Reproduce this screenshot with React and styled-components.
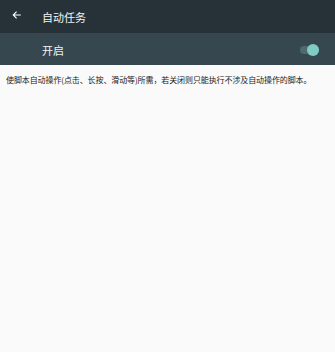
import styled, { createGlobalStyle } from "styled-components";

const Global = createGlobalStyle`
  html, body { margin: 0; padding: 0; background: #fafafa; }
  body { font-family: "Noto Sans CJK SC", "Noto Sans", sans-serif; }
`;

const Page = styled.div`
  min-height: 352px;
  background: #fafafa;
`;

const Toolbar = styled.div`
  height: 33px;
  background: #263238;
  display: flex;
  align-items: center;
  padding-left: 12px;
  color: #fff;
`;

const BackButton = styled.div`
  width: 30px;
  display: flex;
  align-items: center;
  margin-top: -4px;
`;

const Title = styled.div`
  font-size: 11px;
  color: #f2f4f5;
  margin-top: 1px;
`;

const SwitchBar = styled.div`
  height: 32px;
  background: #37474f;
  display: flex;
  align-items: center;
  justify-content: space-between;
  padding: 1px 16px 0 42px;
  box-sizing: border-box;
`;

const SwitchLabel = styled.div`
  font-size: 11px;
  color: #f2f4f5;
`;

const Track = styled.div`
  position: relative;
  width: 19px;
  height: 8px;
  border-radius: 4px;
  background: ${(p) => (p.$on ? "#4e6a6c" : "#59666c")};
`;

const Thumb = styled.div`
  position: absolute;
  top: -2px;
  left: ${(p) => (p.$on ? "7px" : "-2px")};
  width: 12px;
  height: 12px;
  border-radius: 50%;
  background: #80cbc4;
`;

const Description = styled.p`
  margin: 0;
  padding: 9px 6px;
  font-size: 8px;
  line-height: 12px;
  color: #222;
  letter-spacing: -0.1px;
`;

export default function App() {
  return (
    <Page>
      <Global />
      <Toolbar>
        <BackButton>
          <svg width="10" height="10" viewBox="0 0 24 24" fill="none" stroke="#fff" strokeWidth="2.6">
            <path d="M21 12H4M11 4l-8 8 8 8" />
          </svg>
        </BackButton>
        <Title>自动任务</Title>
      </Toolbar>
      <SwitchBar>
        <SwitchLabel>开启</SwitchLabel>
        <Track $on>
          <Thumb $on />
        </Track>
      </SwitchBar>
      <Description>
        使脚本自动操作(点击、长按、滑动等)所需，若关闭则只能执行不涉及自动操作的脚本。
      </Description>
    </Page>
  );
}
